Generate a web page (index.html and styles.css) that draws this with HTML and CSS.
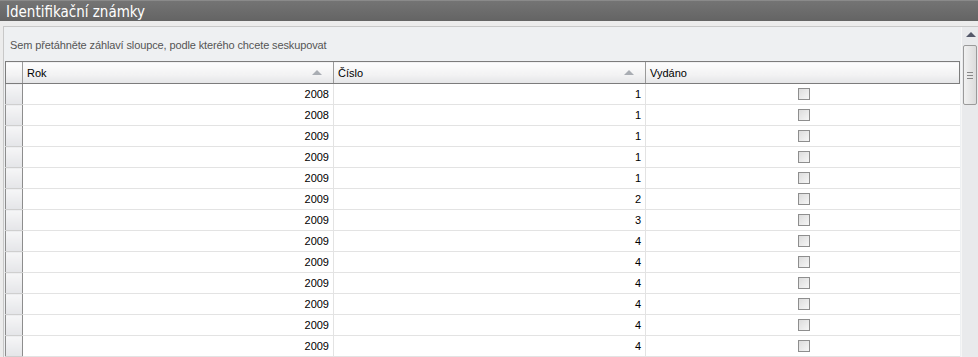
FILE: index.html
```html
<!DOCTYPE html>
<html lang="cs">
<head>
    <meta charset="UTF-8">
    <title>Identifikační známky</title>
    <link rel="stylesheet" href="styles.css">
</head>
<body>
    <div class="titlebar">Identifikační známky</div>
    <div class="panel">
        <div class="main">
            <div class="group-area">Sem přetáhněte záhlaví sloupce, podle kterého chcete seskupovat</div>
            <table class="grid">
                <colgroup>
                    <col class="c-ind">
                    <col class="c-rok">
                    <col class="c-cislo">
                    <col>
                </colgroup>
                <thead>
                    <tr>
                        <th class="ind"></th>
                        <th>Rok<span class="sort"></span></th>
                        <th>Číslo<span class="sort"></span></th>
                        <th>Vydáno</th>
                    </tr>
                </thead>
                <tbody id="rows">
                </tbody>
            </table>
        </div>
        <div class="scrollbar">
            <div class="arrow-up"></div>
            <div class="thumb"><span class="grip"></span></div>
        </div>
    </div>
    <script>
        const data = [
            [2008, 1], [2008, 1], [2009, 1], [2009, 1], [2009, 1],
            [2009, 2], [2009, 3], [2009, 4], [2009, 4], [2009, 4],
            [2009, 4], [2009, 4], [2009, 4]
        ];
        const tbody = document.getElementById('rows');
        data.forEach(row => {
            const tr = document.createElement('tr');
            tr.innerHTML = '<td class="ind"></td><td class="num">' + row[0] +
                '</td><td class="num">' + row[1] +
                '</td><td class="chk"><span class="checkbox"></span></td>';
            tbody.appendChild(tr);
        });
    </script>
</body>
</html>
```

FILE: styles.css
```css
body {
    margin: 0;
    background: #ececec;
    font-family: "Liberation Sans", Arial, sans-serif;
    font-size: 11px;
    color: #000;
    overflow: hidden;
}
.titlebar {
    height: 21px;
    line-height: 21px;
    padding: 1px 0 0 6px;
    background: linear-gradient(#747474, #646464);
    border-top: 1px solid #8a8a8a;
    box-sizing: border-box;
    color: #fff;
    font-family: "DejaVu Sans Condensed", "DejaVu Sans", sans-serif;
    font-stretch: condensed;
    font-size: 15px;
    overflow: hidden;
}
.panel {
    display: flex;
    margin: 5px 0 0 3px;
    border-top: 1px solid #c8c8c8;
    border-left: 1px solid #c8c8c8;
    background: #eef0f2;
    height: 340px;
}
.main {
    width: 955px;
    padding-left: 1px;
}
.group-area {
    height: 34px;
    padding-left: 5px;
    line-height: 36px;
    color: #555;
    letter-spacing: -0.12px;
}
.grid {
    border-collapse: collapse;
    width: 955px;
    table-layout: fixed;
    background: #fff;
}
.c-ind {
    width: 17px;
}
.c-rok {
    width: 311px;
}
.c-cislo {
    width: 312px;
}
.grid th {
    height: 21px;
    padding: 0 0 0 4px;
    text-align: left;
    font-weight: normal;
    background: linear-gradient(#fdfdfd, #f2f2f3 60%, #e4e5e7);
    border-top: 1px solid #7c7c7c;
    border-bottom: 1px solid #7c7c7c;
    border-left: 1px solid #9a9a9a;
    position: relative;
}
.grid th:first-child {
    border-left: 1px solid #7c7c7c;
}
.grid th:last-child {
    border-right: 1px solid #7c7c7c;
}
.grid th.ind {
    padding: 0;
}
.sort {
    position: absolute;
    right: 11px;
    top: 8px;
    width: 0;
    height: 0;
    border-left: 5px solid transparent;
    border-right: 5px solid transparent;
    border-bottom: 5px solid #a9adb3;
}
.grid td {
    height: 20px;
    padding: 0;
    line-height: 20px;
    border-bottom: 1px solid #e3e3e3;
    border-left: 1px solid #e3e3e3;
    box-sizing: border-box;
}
.grid td.ind {
    background: linear-gradient(#f6f6f7, #e4e5e8);
    border: 1px solid #8d8d8d;
    border-top: 0;
    border-bottom: 1px solid #cfcfcf;
}
.grid td.num {
    text-align: right;
    padding-right: 4px;
}
.grid td.chk {
    text-align: center;
}
.checkbox {
    display: inline-block;
    width: 10px;
    height: 10px;
    margin-left: 2px;
    border: 1px solid #8e8e8e;
    background: linear-gradient(135deg, #dcdcdc, #f6f6f6);
    vertical-align: -2px;
}
.scrollbar {
    width: 18px;
    margin-left: 1px;
    background: #e9eaec;
    border-left: 1px solid #f6f6f6;
}
.arrow-up {
    width: 0;
    height: 0;
    margin: 5px 0 0 4px;
    border-left: 5px solid transparent;
    border-right: 5px solid transparent;
    border-bottom: 5px solid #55596a;
}
.thumb {
    margin: 8px 0 0 1px;
    width: 12px;
    height: 58px;
    border: 1px solid #9a9a9a;
    border-radius: 2px;
    background: linear-gradient(90deg, #f1f1f1, #dcdcdc);
    display: flex;
    align-items: center;
    justify-content: center;
}
.grip {
    width: 6px;
    height: 5px;
    border-top: 1px solid #888;
    border-bottom: 1px solid #888;
    position: relative;
}
.grip::after {
    content: "";
    position: absolute;
    left: 0;
    top: 2px;
    width: 6px;
    border-top: 1px solid #888;
}
```
